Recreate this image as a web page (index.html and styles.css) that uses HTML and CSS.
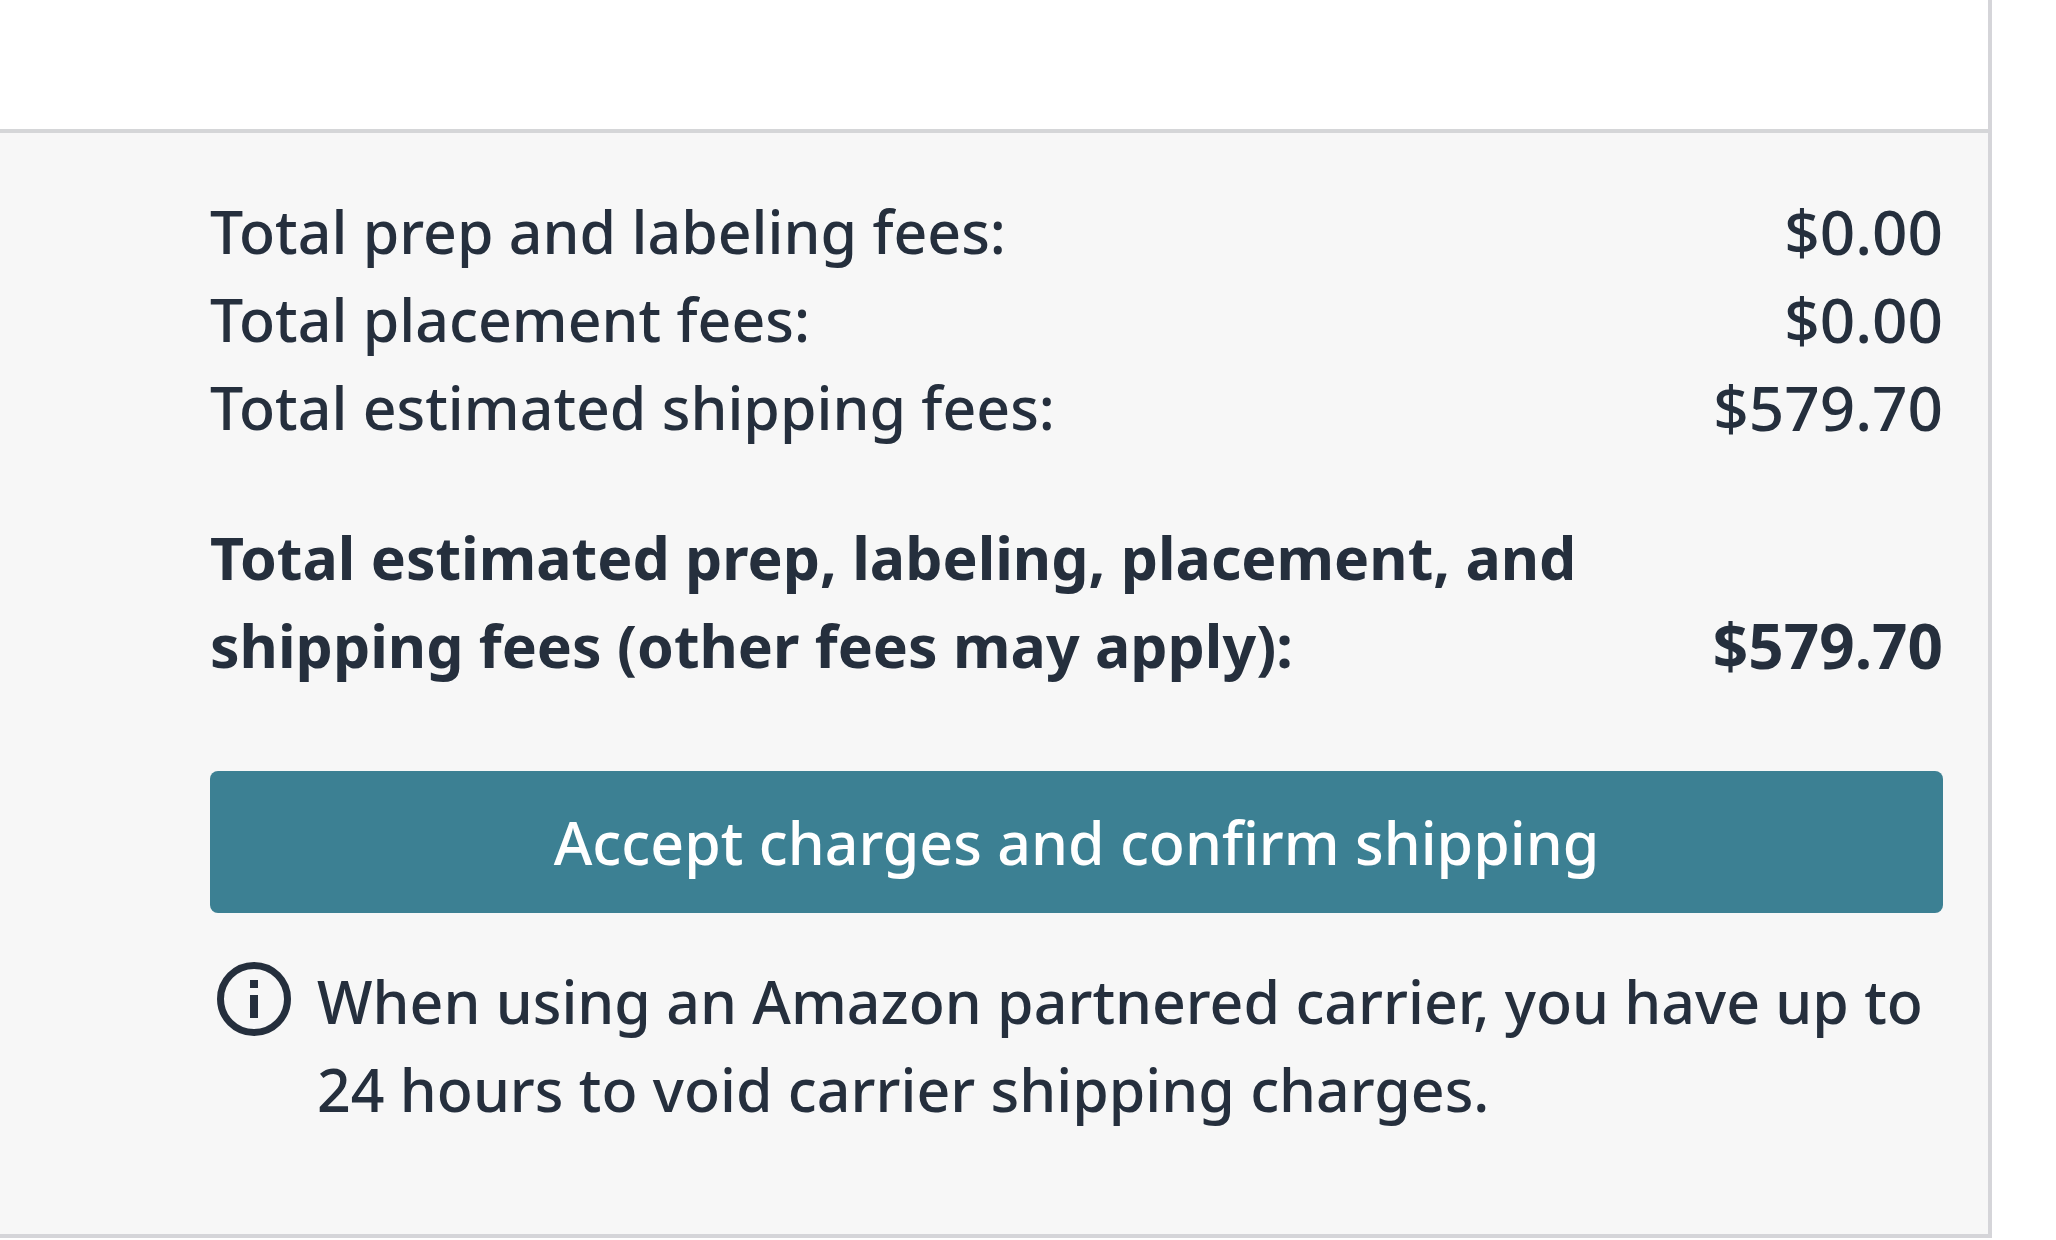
FILE: index.html
```html
<!DOCTYPE html>
<html lang="en">
<head>
  <meta charset="UTF-8" />
  <meta name="viewport" content="width=device-width, initial-scale=1.0" />
  <title>Confirm Shipping</title>
  <link rel="stylesheet" href="styles.css">
</head>
<body>

  <main class="card">
    <div class="card-body"></div>

    <section class="summary">
      <dl class="fees">
        <div class="fee-row">
          <dt>Total prep and labeling fees:</dt>
          <dd>$0.00</dd>
        </div>
        <div class="fee-row">
          <dt>Total placement fees:</dt>
          <dd>$0.00</dd>
        </div>
        <div class="fee-row">
          <dt>Total estimated shipping fees:</dt>
          <dd>$579.70</dd>
        </div>
        <div class="fee-row total">
          <dt>Total estimated prep, labeling, placement, and shipping fees (other fees may apply):</dt>
          <dd>$579.70</dd>
        </div>
      </dl>

      <button type="button" class="confirm-btn">Accept charges and confirm shipping</button>

      <div class="note">
        <svg class="info-icon" viewBox="0 0 74 74" aria-hidden="true">
          <circle cx="37" cy="37" r="33.5" fill="none" stroke="currentColor" stroke-width="7" />
          <rect x="33" y="18" width="8" height="8" fill="currentColor" />
          <rect x="33" y="33" width="8" height="23" fill="currentColor" />
        </svg>
        <p>When using an Amazon partnered carrier, you have up to 24 hours to void carrier shipping charges.</p>
      </div>
    </section>
  </main>

</body>
</html>
```
FILE: styles.css
```css
body {
  font-family: "Noto Sans", "Open Sans", sans-serif;
  font-size: 59px;
  font-weight: 500;
  line-height: 88px;
  color: #252f3d;
  background: #fff;
  margin: 0;
}

.card {
  margin-right: 64px;
  border-right: 4px solid #d5d5d9;
  border-bottom: 4px solid #d5d5d9;
}

.card-body {
  height: 129px;
}

.summary {
  padding: 54px 45px 101px 210px;
  background: #f7f7f7;
  border-top: 4px solid #d5d6d8;
}

.fees {
  margin: 0;
}

.fee-row {
  display: flex;
  justify-content: space-between;
  align-items: flex-end;
  gap: 64px;
}

.fee-row dd {
  margin: 0;
  font-size: 62px;
}

.total {
  margin-top: 62px;
  font-weight: 700;
}

.confirm-btn {
  display: block;
  width: 100%;
  margin: 82px 0 44px;
  padding: 27px;
  font: inherit;
  color: #fff;
  background: #3c8093;
  border: none;
  border-radius: 8px;
  cursor: pointer;
}

.note {
  display: flex;
  gap: 26px;
  padding-left: 7px;
}

.note p {
  margin: 0;
}

.info-icon {
  flex: none;
  width: 74px;
  height: 74px;
  margin-top: 5px;
}
```
